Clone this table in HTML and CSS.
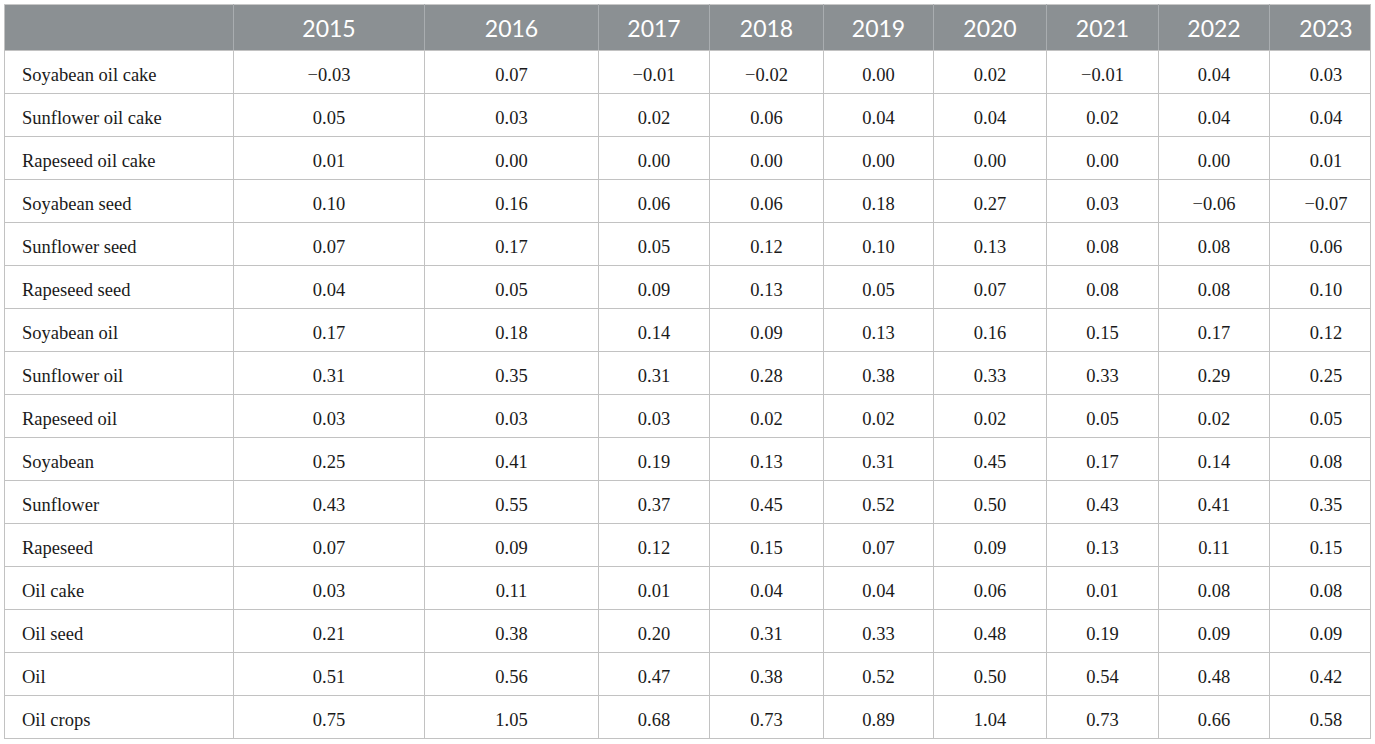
FILE: index.html
```html
<!DOCTYPE html>
<html lang="en">
<head>
<meta charset="utf-8">
<title>Table</title>
<link rel="stylesheet" href="styles.css">
</head>
<body>
<table class="data">
  <colgroup>
    <col class="c-name"><col class="c-2015"><col class="c-2016"><col class="c-2017"><col class="c-2018"><col class="c-2019"><col class="c-2020"><col class="c-2021"><col class="c-2022"><col class="c-2023">
  </colgroup>
  <thead>
    <tr><th></th><th>2015</th><th>2016</th><th>2017</th><th>2018</th><th>2019</th><th>2020</th><th>2021</th><th>2022</th><th class="last">2023</th></tr>
  </thead>
  <tbody>
    <tr><td>Soyabean oil cake</td><td>−0.03</td><td>0.07</td><td>−0.01</td><td>−0.02</td><td>0.00</td><td>0.02</td><td>−0.01</td><td>0.04</td><td class="last">0.03</td></tr>
    <tr><td>Sunflower oil cake</td><td>0.05</td><td>0.03</td><td>0.02</td><td>0.06</td><td>0.04</td><td>0.04</td><td>0.02</td><td>0.04</td><td class="last">0.04</td></tr>
    <tr><td>Rapeseed oil cake</td><td>0.01</td><td>0.00</td><td>0.00</td><td>0.00</td><td>0.00</td><td>0.00</td><td>0.00</td><td>0.00</td><td class="last">0.01</td></tr>
    <tr><td>Soyabean seed</td><td>0.10</td><td>0.16</td><td>0.06</td><td>0.06</td><td>0.18</td><td>0.27</td><td>0.03</td><td>−0.06</td><td class="last">−0.07</td></tr>
    <tr><td>Sunflower seed</td><td>0.07</td><td>0.17</td><td>0.05</td><td>0.12</td><td>0.10</td><td>0.13</td><td>0.08</td><td>0.08</td><td class="last">0.06</td></tr>
    <tr><td>Rapeseed seed</td><td>0.04</td><td>0.05</td><td>0.09</td><td>0.13</td><td>0.05</td><td>0.07</td><td>0.08</td><td>0.08</td><td class="last">0.10</td></tr>
    <tr><td>Soyabean oil</td><td>0.17</td><td>0.18</td><td>0.14</td><td>0.09</td><td>0.13</td><td>0.16</td><td>0.15</td><td>0.17</td><td class="last">0.12</td></tr>
    <tr><td>Sunflower oil</td><td>0.31</td><td>0.35</td><td>0.31</td><td>0.28</td><td>0.38</td><td>0.33</td><td>0.33</td><td>0.29</td><td class="last">0.25</td></tr>
    <tr><td>Rapeseed oil</td><td>0.03</td><td>0.03</td><td>0.03</td><td>0.02</td><td>0.02</td><td>0.02</td><td>0.05</td><td>0.02</td><td class="last">0.05</td></tr>
    <tr><td>Soyabean</td><td>0.25</td><td>0.41</td><td>0.19</td><td>0.13</td><td>0.31</td><td>0.45</td><td>0.17</td><td>0.14</td><td class="last">0.08</td></tr>
    <tr><td>Sunflower</td><td>0.43</td><td>0.55</td><td>0.37</td><td>0.45</td><td>0.52</td><td>0.50</td><td>0.43</td><td>0.41</td><td class="last">0.35</td></tr>
    <tr><td>Rapeseed</td><td>0.07</td><td>0.09</td><td>0.12</td><td>0.15</td><td>0.07</td><td>0.09</td><td>0.13</td><td>0.11</td><td class="last">0.15</td></tr>
    <tr><td>Oil cake</td><td>0.03</td><td>0.11</td><td>0.01</td><td>0.04</td><td>0.04</td><td>0.06</td><td>0.01</td><td>0.08</td><td class="last">0.08</td></tr>
    <tr><td>Oil seed</td><td>0.21</td><td>0.38</td><td>0.20</td><td>0.31</td><td>0.33</td><td>0.48</td><td>0.19</td><td>0.09</td><td class="last">0.09</td></tr>
    <tr><td>Oil</td><td>0.51</td><td>0.56</td><td>0.47</td><td>0.38</td><td>0.52</td><td>0.50</td><td>0.54</td><td>0.48</td><td class="last">0.42</td></tr>
    <tr><td>Oil crops</td><td>0.75</td><td>1.05</td><td>0.68</td><td>0.73</td><td>0.89</td><td>1.04</td><td>0.73</td><td>0.66</td><td class="last">0.58</td></tr>
  </tbody>
</table>
</body>
</html>
```

FILE: styles.css
```css
html, body {
  margin: 0;
  padding: 0;
  background: #ffffff;
}

body {
  padding: 4px 0 0 4px;
}

.data {
  border-collapse: collapse;
  table-layout: fixed;
  width: 1366px;
  border: 1px solid #c2c2c2;
}

.c-name { width: 229px; }
.c-2015 { width: 191px; }
.c-2016 { width: 174px; }
.c-2017 { width: 111px; }
.c-2018 { width: 114px; }
.c-2019 { width: 110px; }
.c-2020 { width: 113px; }
.c-2021 { width: 112px; }
.c-2022 { width: 111px; }
.c-2023 { width: 101px; }

.data thead tr {
  height: 46px;
}

.data th {
  background: #8b9093;
  color: #ffffff;
  font-family: Lato, "Open Sans", sans-serif;
  font-weight: 400;
  font-size: 23px;
  text-align: center;
  padding: 1px 0 0 0;
  border: 1px solid #c2c2c2;
  border-left-color: #a9adb0;
  border-right-color: #a9adb0;
  border-top-color: #c8c8c8;
}

.data th:first-child {
  border-left-color: #c2c2c2;
}

.data th:last-child {
  border-right-color: #c2c2c2;
}

.data tbody tr {
  height: 43px;
}

.data td {
  font-family: "Liberation Serif", "Times New Roman", serif;
  font-size: 18.5px;
  color: #1a1a1a;
  text-align: center;
  padding: 6px 0 0 0;
  border: 1px solid #c2c2c2;
}

.data td:first-child {
  text-align: left;
  padding-left: 17px;
}

.data .last {
  padding-left: 12px;
}
```
